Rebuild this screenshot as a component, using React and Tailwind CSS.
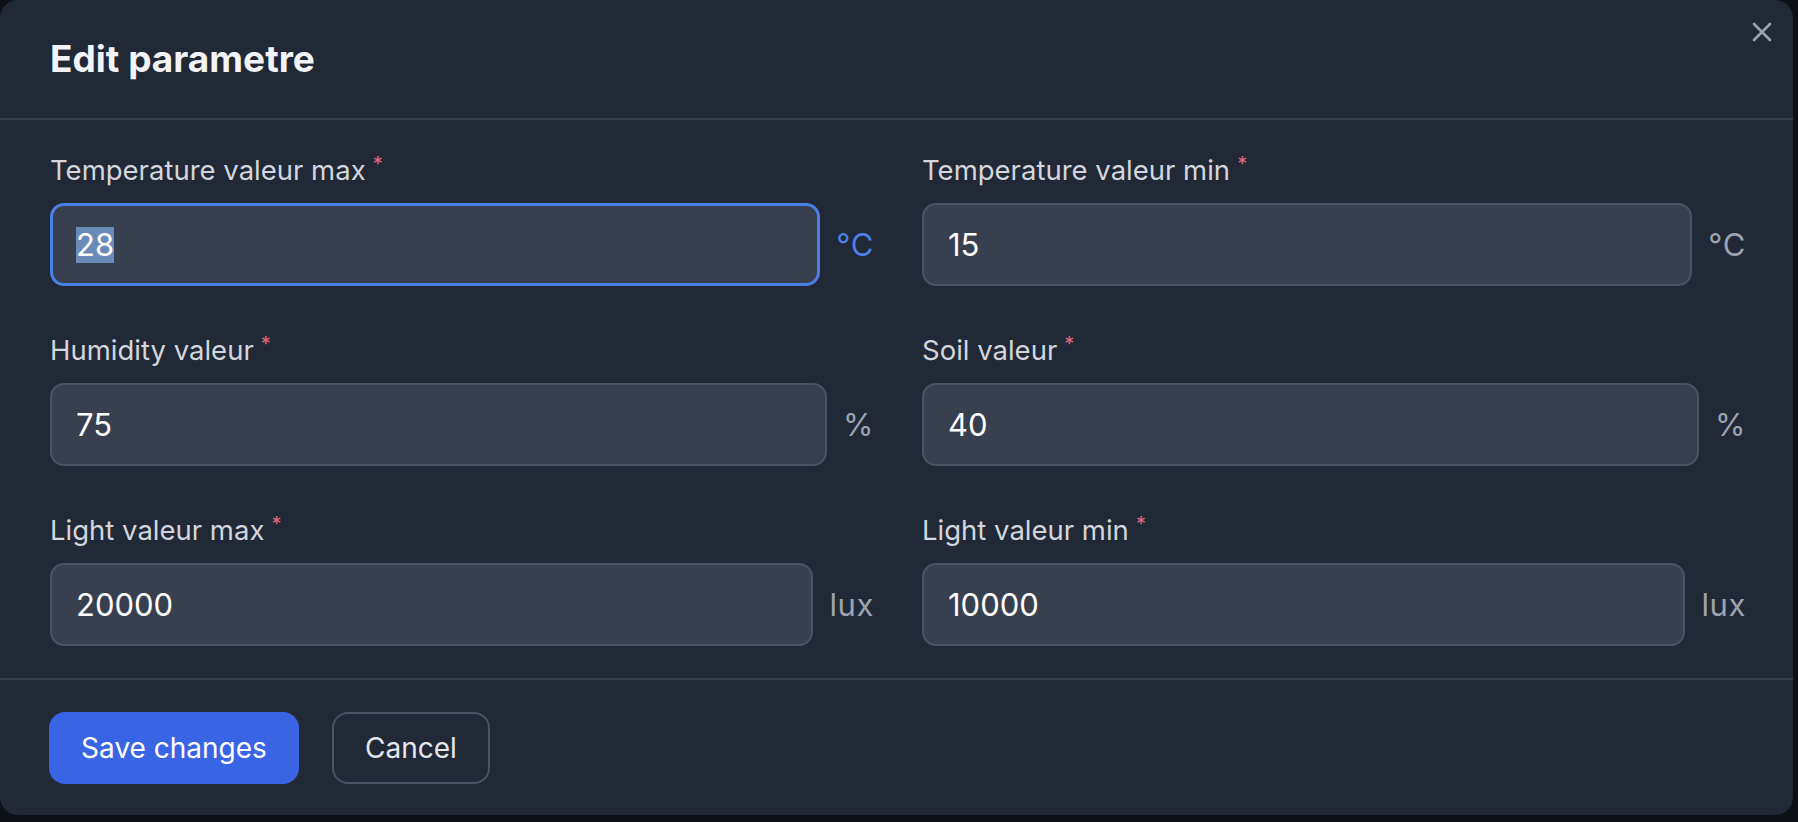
import React from "react";

const fields = [
  { label: "Temperature valeur max", value: "28", unit: "°C", focused: true },
  { label: "Temperature valeur min", value: "15", unit: "°C" },
  { label: "Humidity valeur", value: "75", unit: "%" },
  { label: "Soil valeur", value: "40", unit: "%" },
  { label: "Light valeur max", value: "20000", unit: "lux" },
  { label: "Light valeur min", value: "10000", unit: "lux" },
];

function Field({ label, value, unit, focused }) {
  return (
    <div className="flex flex-col">
      <div className="flex items-start h-[36px]">
        <span className="text-[27.5px] leading-[36px] text-[#d3d6dc]">{label}</span>
        <span className="ml-[7px] mt-[2px] text-[20px] leading-[20px] text-[#e2677d]">*</span>
      </div>
      <div className="mt-[15px] flex items-center gap-[16px]">
        {focused ? (
          <div className="flex-1 h-[83px] rounded-[14px] border-[3px] border-[#4a7fe5] bg-[#383f4f] pl-[23px] flex items-center">
            <span className="text-[31px] leading-[36px] text-white bg-[#6a8bba]">{value}</span>
          </div>
        ) : (
          <div className="flex-1 h-[83px] rounded-[14px] border-2 border-[#4b5263] bg-[#383f4f] pl-[24px] flex items-center">
            <span className="text-[31px] leading-[36px] text-white">{value}</span>
          </div>
        )}
        <span className={"text-[31px] leading-[36px] tracking-[0.02em] " + (focused ? "text-[#4a80e8]" : "text-[#9ca3af]")}>{unit}</span>
      </div>
    </div>
  );
}

export default function App() {
  return (
    <div
      className="w-[1798px] h-[822px] bg-[#0d1016] pr-[5px] pb-[7px]"
      style={{ fontFamily: "Inter, 'Noto Sans', sans-serif" }}
    >
      <div className="relative h-full bg-[#212836] rounded-[18px] flex flex-col">
        <div className="h-[120px] border-b-2 border-[#373e4c] px-[50px] flex items-center">
          <h2 className="text-[37px] font-bold text-[#f1f3f6]">Edit parametre</h2>
        </div>
        <button className="absolute top-[22px] right-[21px] w-[20px] h-[20px] flex items-center justify-center">
          <svg width="20" height="20" viewBox="0 0 20 20" fill="none" stroke="#9ca3af" strokeWidth="2.6" strokeLinecap="round">
            <path d="M2 2 L18 18 M18 2 L2 18" />
          </svg>
        </button>
        <div className="pl-[50px] pr-[47px] pt-[32px] pb-[32px] grid grid-cols-2 gap-x-[48px] gap-y-[46px]">
          {fields.map((f) => (
            <Field key={f.label} {...f} />
          ))}
        </div>
        <div className="border-t-2 border-[#373e4c] px-[49px] pt-[32px] flex gap-[33px]">
          <button className="h-[72px] w-[250px] rounded-[16px] bg-[#3964e3] text-white text-[28px]">Save changes</button>
          <button className="h-[72px] w-[158px] rounded-[16px] border-2 border-[#4b5263] text-[#e5e7eb] text-[28px]">Cancel</button>
        </div>
      </div>
    </div>
  );
}
